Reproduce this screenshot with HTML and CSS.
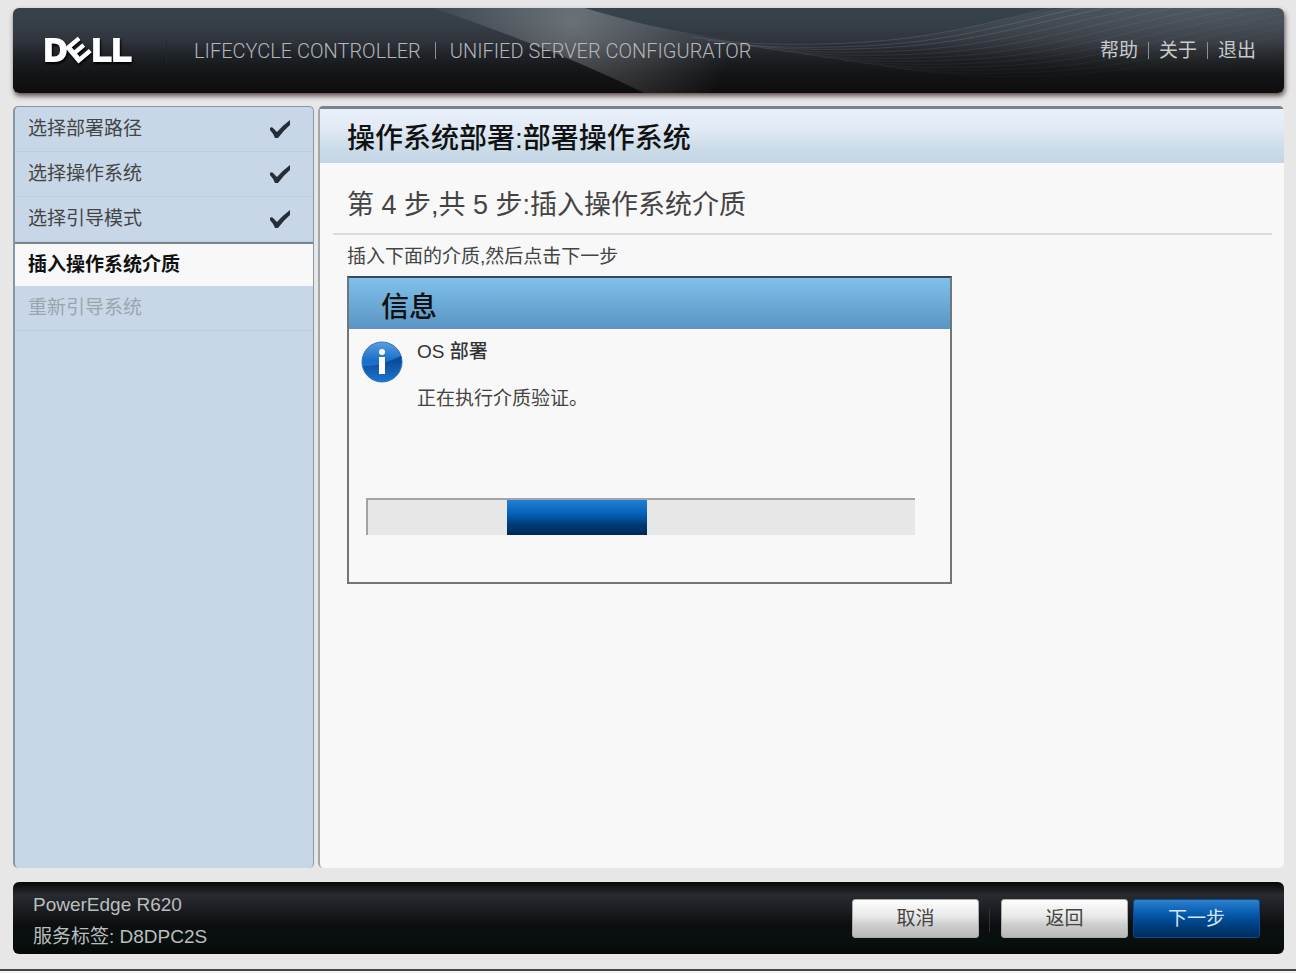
FILE: index.html
```html
<!DOCTYPE html>
<html lang="zh-CN">
    <head>
        <meta charset="UTF-8" />
        <meta name="viewport" content="width=device-width, initial-scale=1.0" />
        <title>Unified Server Configurator</title>
        <link rel="stylesheet" href="styles.css">
    </head>
    <body>
        <header class="header">
            <svg class="header-art" viewBox="0 0 1272 85" preserveAspectRatio="none" aria-hidden="true">
                <defs>
                    <radialGradient id="fade" cx="0.8" cy="0" r="0.8">
                        <stop offset="0" stop-color="#fff" stop-opacity="0.12" />
                        <stop offset="0.5" stop-color="#fff" stop-opacity="0.06" />
                        <stop offset="1" stop-color="#fff" stop-opacity="0" />
                    </radialGradient>
                    <radialGradient id="beam" gradientUnits="userSpaceOnUse" cx="560" cy="16" r="160">
                        <stop offset="0" stop-color="#fff" stop-opacity="0.26" />
                        <stop offset="0.5" stop-color="#fff" stop-opacity="0.13" />
                        <stop offset="1" stop-color="#fff" stop-opacity="0" />
                    </radialGradient>
                    <linearGradient id="line" gradientUnits="userSpaceOnUse" x1="0" y1="0" x2="0" y2="50">
                        <stop offset="0" stop-color="#fff" stop-opacity="0.1" />
                        <stop offset="1" stop-color="#fff" stop-opacity="0.12" />
                    </linearGradient>
                    <path id="wave" d="M680 29 C740 38 790 37 837 35 C920 31 970 16 1040 0 S1150 -24 1272 -34" />
                </defs>
                <path d="M420 0 Q540 40 632 85 H900 V35 C740 42 660 26 572 0 Z" fill="url(#beam)" />
                <path d="M820 36 C920 32 970 16 1047 0 H1272 V85 H820 Z" fill="url(#fade)" />
                <g fill="none" stroke="url(#line)">
                    <use href="#wave" />
                    <use href="#wave" x="14" y="3" />
                    <use href="#wave" x="30" y="5" />
                    <use href="#wave" x="50" y="8" opacity="0.7" />
                    <use href="#wave" x="70" y="11" opacity="0.6" />
                    <use href="#wave" x="90" y="14" opacity="0.5" />
                    <use href="#wave" x="110" y="17" opacity="0.5" />
                    <use href="#wave" x="130" y="20" opacity="0.4" />
                    <use href="#wave" x="150" y="23" opacity="0.4" />
                    <use href="#wave" x="170" y="26" opacity="0.3" />
                    <use href="#wave" x="190" y="29" opacity="0.3" />
                    <use href="#wave" x="210" y="32" opacity="0.2" />
                </g>
            </svg>
            <svg class="logo" viewBox="0 0 92 40" role="img" aria-label="DELL">
                <g class="logo-text">
                    <text x="1" y="30">D</text>
                    <text class="logo-e" x="0" y="10" transform="translate(35 19) rotate(-40)">E</text>
                    <text x="49" y="30">L</text>
                    <text x="69" y="30">L</text>
                </g>
            </svg>
            <div class="product">
                <span>LIFECYCLE CONTROLLER</span>
                <span class="bar"></span>
                <span>UNIFIED SERVER CONFIGURATOR</span>
            </div>
            <nav class="links">
                <a href="#">帮助</a>
                <span class="bar"></span>
                <a href="#">关于</a>
                <span class="bar"></span>
                <a href="#">退出</a>
            </nav>
        </header>

        <div class="main">
            <ol class="steps">
                <li class="step">
                    选择部署路径
                    <svg class="check" viewBox="0 0 22 19" aria-label="已完成"><path d="M1 8 Q3 6 5 9 L8 12 Q13 6 21 0 V5 Q14 11 9 18 H6 Q4 13 1 10 Z" /></svg>
                </li>
                <li class="step">
                    选择操作系统
                    <svg class="check" viewBox="0 0 22 19" aria-label="已完成"><path d="M1 8 Q3 6 5 9 L8 12 Q13 6 21 0 V5 Q14 11 9 18 H6 Q4 13 1 10 Z" /></svg>
                </li>
                <li class="step">
                    选择引导模式
                    <svg class="check" viewBox="0 0 22 19" aria-label="已完成"><path d="M1 8 Q3 6 5 9 L8 12 Q13 6 21 0 V5 Q14 11 9 18 H6 Q4 13 1 10 Z" /></svg>
                </li>
                <li class="step current" aria-current="step">插入操作系统介质</li>
                <li class="step pending">重新引导系统</li>
            </ol>

            <main class="content">
                <h1>操作系统部署:部署操作系统</h1>
                <h2>第 4 步,共 5 步:插入操作系统介质</h2>
                <p class="hint">插入下面的介质,然后点击下一步</p>

                <section class="dialog">
                    <h3>信息</h3>
                    <div class="dialog-body">
                        <svg class="info" viewBox="0 0 42 42" aria-hidden="true">
                            <defs>
                                <linearGradient id="ball" x1="0" y1="0" x2="0" y2="1">
                                    <stop offset="0" stop-color="#5b9fdf" />
                                    <stop offset="0.45" stop-color="#1a6fca" />
                                    <stop offset="1" stop-color="#1c74cc" />
                                </linearGradient>
                                <linearGradient id="shade" x1="0" y1="0" x2="0" y2="1">
                                    <stop offset="0" stop-color="#04408c" stop-opacity="0.9" />
                                    <stop offset="1" stop-color="#04408c" stop-opacity="0" />
                                </linearGradient>
                            </defs>
                            <circle cx="21" cy="21" r="20" fill="url(#ball)" stroke="#2f74ba" />
                            <path d="M2 25 Q18 26 40 15 A20 20 0 0 1 21 40 A20 20 0 0 1 2 25 Z" fill="url(#shade)" />
                            <circle cx="21" cy="11" r="3" fill="#fff" />
                            <path d="M18 16 H24 V33 H18 Z" fill="#fff" />
                        </svg>
                        <div class="message">
                            <p class="task">OS 部署</p>
                            <p>正在执行介质验证。</p>
                        </div>
                    </div>
                    <div class="progress" role="progressbar" aria-label="介质验证">
                        <div class="progress-fill"></div>
                    </div>
                </section>
            </main>
        </div>

        <footer class="footer">
            <div class="system">
                <p>PowerEdge R620</p>
                <p>服务标签: D8DPC2S</p>
            </div>
            <div class="buttons">
                <button type="button">取消</button>
                <span class="divider"></span>
                <button type="button">返回</button>
                <button type="button" class="primary">下一步</button>
            </div>
        </footer>
    </body>
</html>
```
FILE: styles.css
```css
* {
    box-sizing: border-box;
    margin: 0;
    padding: 0;
}

html {
    background: #f4f4f4;
}

body {
    display: flex;
    flex-direction: column;
    min-height: calc(100vh - 2px);
    padding: 8px 12px 15px 13px;
    border-bottom: 2px solid #444;
    background: #e7e7e7;
    color: #444;
    font-family: "Liberation Sans", "Noto Sans CJK SC", sans-serif;
    font-size: 19px;
    line-height: 32px;
}

/* top bar */
.header {
    position: relative;
    display: flex;
    align-items: center;
    height: 85px;
    padding: 0 28px 0 30px;
    border-radius: 6px;
    background: linear-gradient(#36434a, #363f47 18%, #30343d 38%, #1d2125 58%, #131415 78%, #0d0d0f);
    box-shadow: 1px 3px 5px rgba(60, 40, 40, 0.8);
    color: #b4b6b8;
}

.header-art {
    position: absolute;
    top: 0;
    left: 0;
    width: 100%;
    height: 100%;
}

.logo {
    overflow: visible;
    width: 92px;
    height: 40px;
    filter: drop-shadow(1px 2px 1px #000);
}

.logo-text {
    fill: #fff;
    stroke: #fff;
    stroke-width: 2px;
    font-size: 32px;
    font-weight: bold;
}

.logo-e {
    font-size: 29px;
    stroke-width: 1px;
    text-anchor: middle;
}

.product {
    display: flex;
    align-items: center;
    gap: 14px;
    margin-left: 31px;
    padding-left: 27px;
    border-left: 1px solid #22282c;
    font-family: Roboto, sans-serif;
    font-size: 20px;
    font-weight: 300;
    line-height: 24px;
}

.links {
    display: flex;
    align-items: center;
    gap: 10px;
    margin-left: auto;
    line-height: 28px;
}

.product,
.links {
    position: relative;
}

.links a {
    color: #c8cacb;
    text-decoration: none;
}

.bar {
    width: 1px;
    height: 17px;
    background: #8d9092;
}

/* middle */
.main {
    display: flex;
    flex: 1;
    gap: 4px;
    margin: 13px 0 14px;
}

.steps {
    flex: 0 0 301px;
    border: 2px solid #8797a5;
    border-width: 1px 1px 0 2px;
    border-radius: 5px;
    background: #c7d7e7;
    list-style: none;
}

.step {
    display: flex;
    align-items: center;
    justify-content: space-between;
    height: 45px;
    padding: 0 22px 0 13px;
    border-bottom: 1px solid #bccddd;
}

.current {
    height: 44px;
    border-top: 2px solid #7b858e;
    border-bottom: 0;
    background: #f8f8f8;
    color: #111;
    font-weight: bold;
}

.pending {
    color: #9ba5ae;
}

.check {
    width: 22px;
    height: 19px;
    fill: #252d37;
}

.content {
    flex: 1;
    border-top: 3px solid #79838c;
    border-left: 2px solid #a3a8ad;
    border-radius: 5px;
    background: #f8f8f8;
}

h1,
h2,
h3 {
    font-size: 28px;
    font-weight: 500;
    color: #111;
}

h1 {
    padding: 6px 27px 0;
    background: linear-gradient(#e8f1fa, #e2eaf6 35%, #cddde9 70%, #c3d4e5);
    line-height: 48px;
}

h2 {
    margin: 0 12px 0 13px;
    padding: 14px 14px 0;
    border-bottom: 2px solid #dcdcdc;
    color: #444;
    font-size: 27px;
    font-weight: normal;
    line-height: 56px;
}

.hint {
    padding: 6px 27px 3px;
}

/* message box */
.dialog {
    max-width: 605px;
    margin: 0 27px;
    padding-bottom: 47px;
    border: 2px solid #6d777c;
    border-top-color: #38475a;
}

.dialog h3 {
    padding: 8px 32px 0;
    background: linear-gradient(#7fc1ea, #5a94c4);
    line-height: 43px;
}

.dialog-body {
    display: flex;
    gap: 14px;
    padding: 7px 12px;
}

.info {
    width: 42px;
    height: 42px;
    margin-top: 5px;
}

.message .task {
    margin-bottom: 15px;
    font-weight: 500;
    color: #333;
}

.progress {
    height: 37px;
    margin: 76px 35px 0 17px;
    border-top: 2px solid #a3a3a3;
    border-left: 2px solid #a3a3a3;
    background: #e7e7e7;
}

.progress-fill {
    width: 140px;
    height: 100%;
    margin-left: 139px;
    background: linear-gradient(#2180d3, #0560b6 40%, #014f97 55%, #003b75 70%, #00275a);
}

/* bottom bar */
.footer {
    display: flex;
    align-items: center;
    justify-content: space-between;
    height: 72px;
    padding: 0 24px 0 20px;
    border-radius: 6px;
    background: linear-gradient(#060709, #272b30 18%, #1a1c21 40%, #0c0e10 60%, #08110f 80%, #060909);
    color: #bcbebe;
}

.system {
    padding-top: 6px;
}

.buttons {
    display: flex;
    align-items: center;
    gap: 5px;
}

.buttons button {
    width: 127px;
    height: 39px;
    border: 1px solid #aaa;
    border-radius: 3px;
    background: linear-gradient(#fdfdfd, #e8e8e8 45%, #cfcfcf 65%, #b8b8b8);
    color: #444;
    font: inherit;
    line-height: 35px;
}

.buttons .primary {
    border-color: #0b4c90;
    background: linear-gradient(#2f80cc, #0b62b7 30%, #00509b 50%, #003e7c 70%, #002c60);
    color: #d8e6f4;
}

.divider {
    width: 1px;
    height: 23px;
    margin: 5px 6px 0 5px;
    background: #303438;
}
```
